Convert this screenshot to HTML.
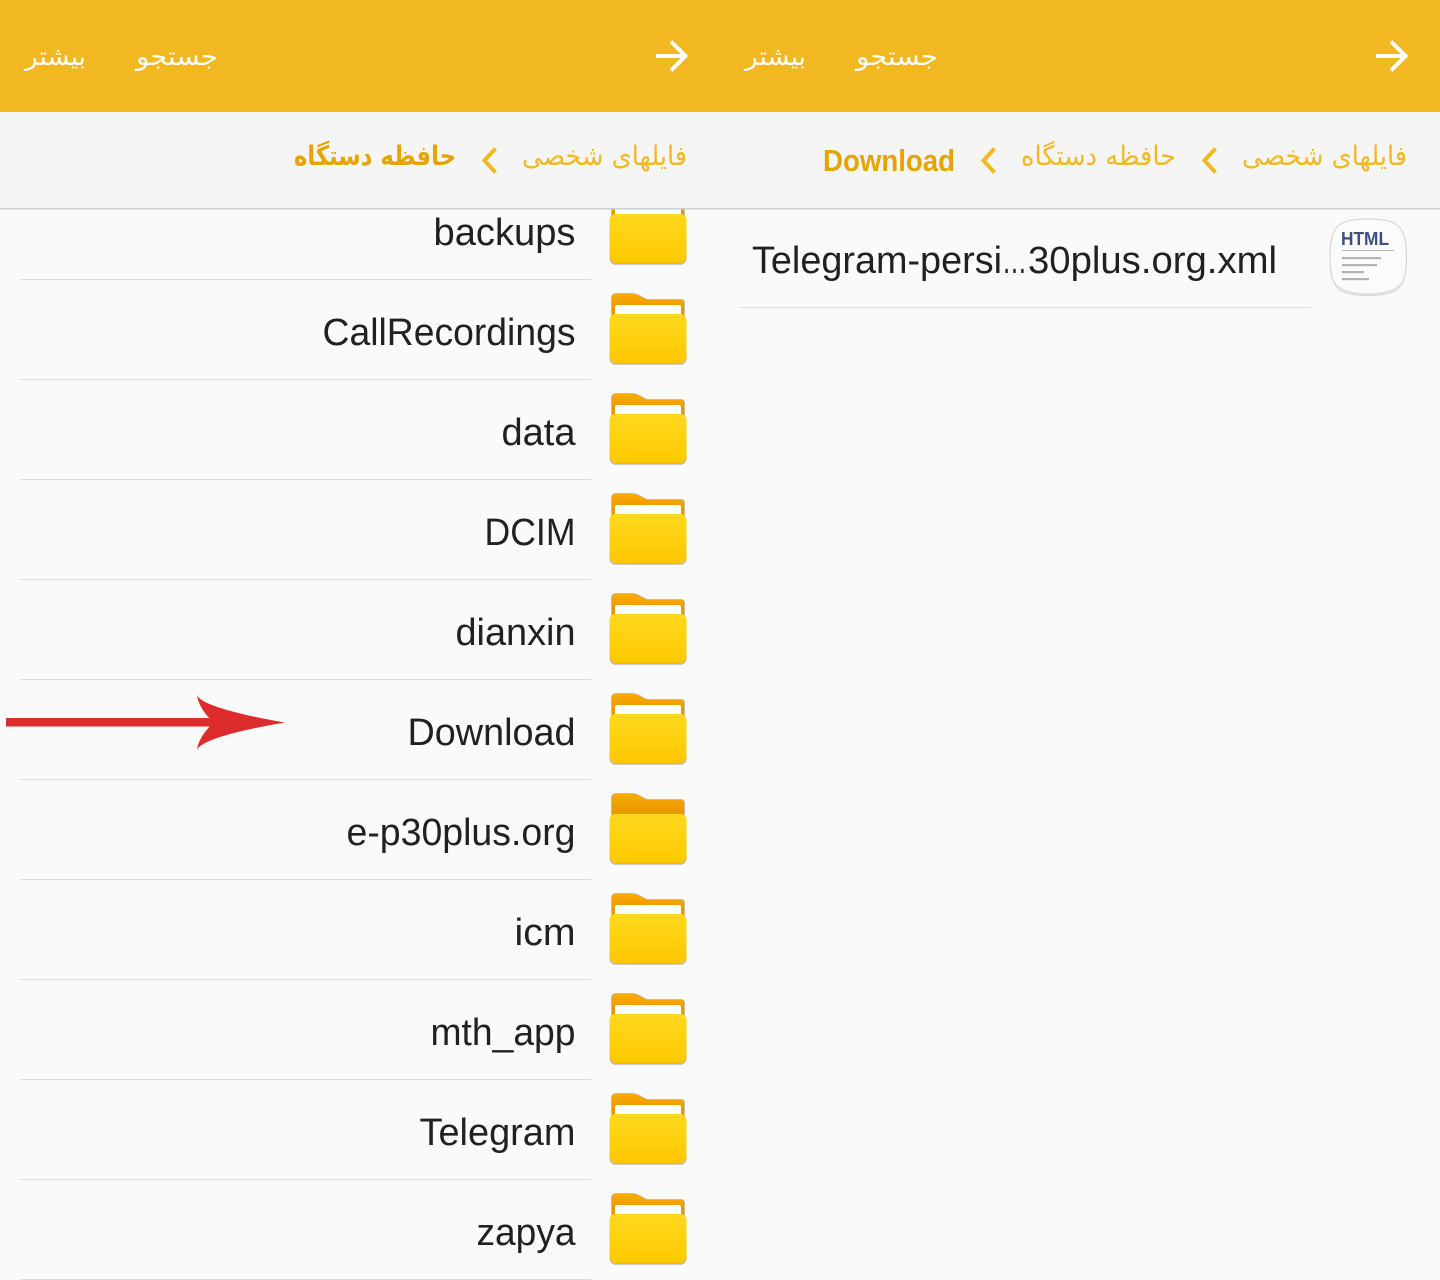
<!DOCTYPE html>
<html lang="fa"><head><meta charset="utf-8"><title>Files</title>
<style>
html,body{margin:0;padding:0;width:1440px;height:1280px;overflow:hidden;background:#fafafa}
svg{display:block}
text{font-family:"Liberation Sans",sans-serif}
.n{font-size:38px;fill:#212121}
.h{font-size:25px;fill:#fff}
.c{font-size:27px;fill:#F1B822}
.b{font-size:27px;fill:#E5A500;font-weight:bold}
</style></head><body>
<svg width="1440" height="1280" viewBox="0 0 1440 1280" xmlns="http://www.w3.org/2000/svg">
<defs>
<linearGradient id="f" x1="0" y1="0" x2="0" y2="1"><stop offset="0" stop-color="#FFD91E"/><stop offset="1" stop-color="#FFC800"/></linearGradient>
<linearGradient id="t" x1="0" y1="0" x2="0" y2="1"><stop offset="0" stop-color="#FFAB00"/><stop offset=".6" stop-color="#E89A00"/><stop offset="1" stop-color="#E89A00"/></linearGradient>
<g id="folder">
<path d="M611.500 719V698Q611.500 693.500 616 693.500H632Q636 693.500 639.500 695.500L644 698Q646 699.500 649 699.500H681Q684.500 699.500 684.500 703V719Z" fill="url(#t)" stroke="#bdb6a4" stroke-width=".7"/>
<path d="M615 717V707Q615 705 617 705H679Q681 705 681 707V717Z" fill="#fff"/>
<rect x="609.500" y="714.500" width="77" height="49.500" rx="6" fill="#b9b9b9" transform="translate(0 .8)"/>
<rect x="609.500" y="714" width="77" height="49" rx="6" fill="url(#f)"/>
</g>
<g id="folder2">
<path d="M611.500 719V698Q611.500 693.500 616 693.500H632Q636 693.500 639.500 695.500L644 698Q646 699.500 649 699.500H681Q684.500 699.500 684.500 703V719Z" fill="url(#t)" stroke="#bdb6a4" stroke-width=".7"/>
<rect x="609.500" y="714.500" width="77" height="49.500" rx="6" fill="#b9b9b9" transform="translate(0 .8)"/>
<rect x="609.500" y="714" width="77" height="49" rx="6" fill="url(#f)"/>
</g>
</defs>
<rect width="1440" height="1280" fill="#fafafa"/>

<!-- folders -->
<use href="#folder" y="-500"/>
<use href="#folder" y="-400"/>
<use href="#folder" y="-300"/>
<use href="#folder" y="-200"/>
<use href="#folder" y="-100"/>
<use href="#folder"/>
<use href="#folder2" y="100"/>
<use href="#folder" y="200"/>
<use href="#folder" y="300"/>
<use href="#folder" y="400"/>
<use href="#folder" y="500"/>

<!-- header bars -->
<rect width="1440" height="112" fill="#F1B822"/>
<rect y="112" width="1440" height="96" fill="#f5f5f5"/>
<rect y="208" width="1440" height="1.500" fill="#cfcfcf"/>

<!-- row dividers -->
<g fill="#dcdcdc">
<rect x="20" y="279" width="571" height="1"/><rect x="20" y="379" width="571" height="1"/>
<rect x="20" y="479" width="571" height="1"/><rect x="20" y="579" width="571" height="1"/>
<rect x="20" y="679" width="571" height="1"/><rect x="20" y="779" width="571" height="1"/>
<rect x="20" y="879" width="571" height="1"/><rect x="20" y="979" width="571" height="1"/>
<rect x="20" y="1079" width="571" height="1"/><rect x="20" y="1179" width="571" height="1"/>
<rect x="20" y="1279" width="571" height="1"/>
<rect x="740" y="307" width="571" height="1"/>
</g>

<!-- row labels -->
<text class="n" x="433.500" y="245" textLength="142" lengthAdjust="spacingAndGlyphs">backups</text>
<text class="n" x="322.500" y="345" textLength="253" lengthAdjust="spacingAndGlyphs">CallRecordings</text>
<text class="n" x="501.500" y="445" textLength="74" lengthAdjust="spacingAndGlyphs">data</text>
<text class="n" x="484.500" y="545" textLength="91" lengthAdjust="spacingAndGlyphs">DCIM</text>
<text class="n" x="455.500" y="645" textLength="120" lengthAdjust="spacingAndGlyphs">dianxin</text>
<text class="n" x="407.500" y="745" textLength="168" lengthAdjust="spacingAndGlyphs">Download</text>
<text class="n" x="346.500" y="845" textLength="229" lengthAdjust="spacingAndGlyphs">e-p30plus.org</text>
<text class="n" x="514.500" y="945" textLength="61" lengthAdjust="spacingAndGlyphs">icm</text>
<text class="n" x="430.500" y="1045" textLength="145" lengthAdjust="spacingAndGlyphs">mth_app</text>
<text class="n" x="419.500" y="1145" textLength="156" lengthAdjust="spacingAndGlyphs">Telegram</text>
<text class="n" x="476.500" y="1245" textLength="99" lengthAdjust="spacingAndGlyphs">zapya</text>
<text class="n" x="752" y="273" textLength="250" lengthAdjust="spacingAndGlyphs">Telegram-persi</text>
<text class="n" x="1002" y="273" textLength="25" lengthAdjust="spacingAndGlyphs">…</text>
<text class="n" x="1028" y="273" textLength="249" lengthAdjust="spacingAndGlyphs">30plus.org.xml</text>

<!-- header text -->
<text class="h" style="font-family:'DejaVu Sans',sans-serif" x="25" y="65" textLength="61" lengthAdjust="spacingAndGlyphs">بیشتر</text>
<text class="h" style="font-family:'DejaVu Sans',sans-serif" x="136" y="65" textLength="82" lengthAdjust="spacingAndGlyphs">جستجو</text>
<text class="h" style="font-family:'DejaVu Sans',sans-serif" x="745" y="65" textLength="61" lengthAdjust="spacingAndGlyphs">بیشتر</text>
<text class="h" style="font-family:'DejaVu Sans',sans-serif" x="856" y="65" textLength="82" lengthAdjust="spacingAndGlyphs">جستجو</text>

<!-- breadcrumbs -->
<text class="c" style="font-family:'DejaVu Sans',sans-serif" x="522" y="165" textLength="165" lengthAdjust="spacingAndGlyphs">فایلهای شخصی</text>
<text class="b" style="font-family:'DejaVu Sans',sans-serif" x="294" y="165" textLength="162" lengthAdjust="spacingAndGlyphs">حافظه دستگاه</text>
<text class="c" style="font-family:'DejaVu Sans',sans-serif" x="1242" y="165" textLength="165" lengthAdjust="spacingAndGlyphs">فایلهای شخصی</text>
<text class="c" style="font-family:'DejaVu Sans',sans-serif" x="1021" y="165" textLength="155" lengthAdjust="spacingAndGlyphs">حافظه دستگاه</text>
<text x="823" y="171" font-size="30.500" font-weight="bold" fill="#E5A500" textLength="132" lengthAdjust="spacingAndGlyphs">Download</text>

<!-- chevrons -->
<g fill="none" stroke="#F1B822" stroke-width="4">
<path d="M495.500 148.500L484.500 160.500L495.500 172.500"/>
<path d="M1215.500 148.500L1204.500 160.500L1215.500 172.500"/>
<path d="M994.500 148.500L983.500 160.500L994.500 172.500"/>
</g>

<!-- back arrows -->
<g fill="none" stroke="#fff" stroke-width="4">
<path d="M656 56H686M671 41.500L685.500 56L671 70.500"/>
<path d="M1376 56H1406M1391 41.500L1405.500 56L1391 70.500"/>
</g>

<!-- red annotation arrow -->
<rect x="6" y="718" width="210" height="8.500" fill="#DD2C2C"/>
<path d="M197 695C200 704 235 714 285 722.500C235 731 200 741 197 750C198 741 205 730 214 722.500C205 715 198 704 197 695Z" fill="#DD2C2C"/>

<!-- html file icon -->
<path d="M1368 219C1398 219 1406.500 226 1406.500 257C1406.500 288 1398 295.500 1368 295.500C1338 295.500 1330 288 1330 257C1330 226 1338 219 1368 219Z" fill="#fbfbfb" stroke="#d6d6d6" stroke-width="1.200"/>
<path d="M1333 278C1337 290 1346 294.800 1368 294.800C1390 294.800 1399 290 1403.500 278C1399 288 1390 293 1368 293C1346 293 1337 288 1333 278Z" fill="#dedede"/>
<text x="1341" y="245" font-size="18" font-weight="bold" fill="#3D4E80" textLength="48" lengthAdjust="spacingAndGlyphs">HTML</text>
<g fill="#b4b4b4">
<rect x="1342" y="250" width="52" height="1"/>
<rect x="1342" y="257" width="39" height="2.200"/>
<rect x="1342" y="264" width="35" height="2.200"/>
<rect x="1342" y="271" width="22" height="2.200"/>
<rect x="1342" y="278" width="27" height="2.200"/>
</g>
</svg>
</body></html>
